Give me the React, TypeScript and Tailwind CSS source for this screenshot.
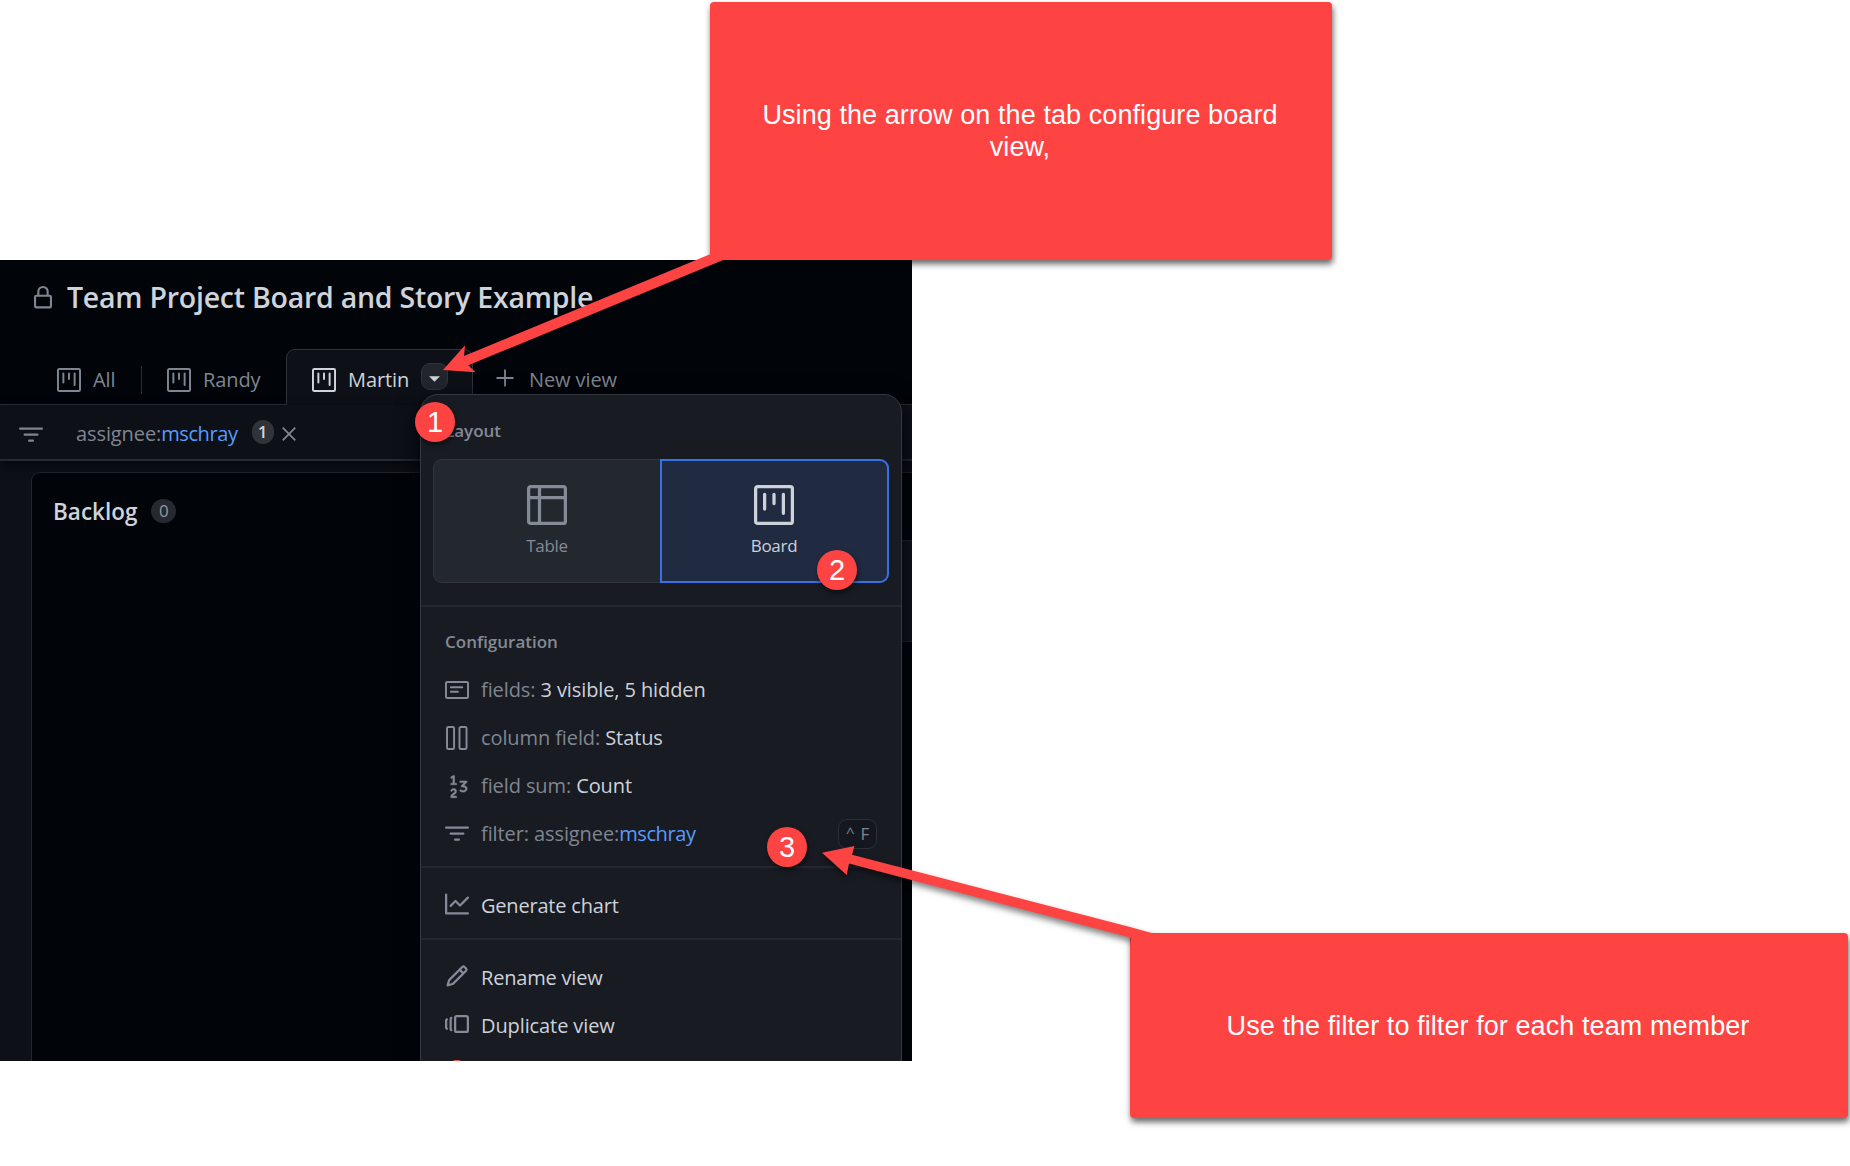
import type { ReactNode } from "react";
import { GoNumber } from "react-icons/go";

type IconProps = { className?: string };

function Svg({ className = "size-6", children }: { className?: string; children: ReactNode }) {
  return (
    <svg viewBox="0 0 16 16" className={`${className} block shrink-0`} fill="currentColor">
      {children}
    </svg>
  );
}

function LockIcon({ className }: IconProps) {
  return (
    <Svg className={className}>
      <g fill="none" stroke="currentColor" strokeWidth="1.4">
        <rect x="2.7" y="7.2" width="10.6" height="7.7" rx="0.8" />
        <path d="M4.9 7V4.4a3.1 3.1 0 0 1 6.2 0V7" />
      </g>
    </Svg>
  );
}

function BoardIcon({ className }: IconProps) {
  return (
    <Svg className={className}>
      <g fill="none" stroke="currentColor" strokeLinecap="round">
        <rect x="0.65" y="0.65" width="14.7" height="14.7" rx="0.8" strokeWidth="1.3" />
        <path d="M4.25 3.7v5.9M8 3.7v3.7M11.75 3.7v7.6" strokeWidth="1.3" />
      </g>
    </Svg>
  );
}

function TableIcon({ className }: IconProps) {
  return (
    <Svg className={className}>
      <g fill="none" stroke="currentColor" strokeWidth="1.3">
        <rect x="0.65" y="0.65" width="14.7" height="14.7" rx="0.8" />
        <path d="M5 0.8v14.4M0.8 5h14.4" />
      </g>
    </Svg>
  );
}

function FilterIcon({ className }: IconProps) {
  return (
    <Svg className={className}>
      <path d="M.75 3a.75.75 0 0 0 0 1.5h14.5a.75.75 0 0 0 0-1.5H.75ZM3 7.75A.75.75 0 0 1 3.75 7h8.5a.75.75 0 0 1 0 1.5h-8.5A.75.75 0 0 1 3 7.75Zm3 4a.75.75 0 0 1 .75-.75h2.5a.75.75 0 0 1 0 1.5h-2.5a.75.75 0 0 1-.75-.75Z" />
    </Svg>
  );
}

function FieldsIcon() {
  return (
    <Svg>
      <g fill="none" stroke="currentColor" strokeWidth="1.3">
        <rect x="0.65" y="2.65" width="14.7" height="10.7" rx="0.9" />
        <path d="M3.9 6.2h7.6M3.9 9.2h4.7" strokeLinecap="round" />
      </g>
    </Svg>
  );
}

function ColumnsIcon() {
  return (
    <Svg>
      <g fill="none" stroke="currentColor" strokeWidth="1.3">
        <rect x="1.35" y="0.65" width="4.7" height="14.7" rx="0.8" />
        <rect x="9.65" y="0.65" width="4.7" height="14.7" rx="0.8" />
      </g>
    </Svg>
  );
}

function GraphIcon() {
  return (
    <Svg>
      <path d="M1.5 1.75V13.5h13.75a.75.75 0 0 1 0 1.5H.75a.75.75 0 0 1-.75-.75V1.75a.75.75 0 0 1 1.5 0Zm14.28 2.53-5.25 5.25a.75.75 0 0 1-1.06 0L7 7.06 4.28 9.78a.751.751 0 0 1-1.042-.018.751.751 0 0 1-.018-1.042l3.25-3.25a.75.75 0 0 1 1.06 0L10 7.94l4.72-4.72a.751.751 0 0 1 1.042.018.751.751 0 0 1 .018 1.042Z" />
    </Svg>
  );
}

function PencilIcon() {
  return (
    <Svg>
      <path d="M11.013 1.427a1.75 1.75 0 0 1 2.474 0l1.086 1.086a1.75 1.75 0 0 1 0 2.474l-8.61 8.61c-.21.21-.47.364-.756.445l-3.251.93a.75.75 0 0 1-.927-.928l.929-3.25c.081-.286.235-.547.445-.758l8.61-8.61Zm.176 4.823L9.75 4.81l-6.286 6.287a.253.253 0 0 0-.064.108l-.558 1.953 1.953-.558a.253.253 0 0 0 .108-.064Zm1.238-3.763a.25.25 0 0 0-.354 0L10.811 3.75l1.439 1.44 1.263-1.263a.25.25 0 0 0 0-.354Z" />
    </Svg>
  );
}

function VersionsIcon() {
  return (
    <Svg>
      <path d="M7.75 14A1.75 1.75 0 0 1 6 12.25v-8.5C6 2.784 6.784 2 7.75 2h6.5c.966 0 1.75.784 1.75 1.75v8.5A1.75 1.75 0 0 1 14.25 14Zm-.25-1.75c0 .138.112.25.25.25h6.5a.25.25 0 0 0 .25-.25v-8.5a.25.25 0 0 0-.25-.25h-6.5a.25.25 0 0 0-.25.25ZM4.9 3.508a.75.75 0 0 1-.274 1.025.249.249 0 0 0-.126.217v6.5c0 .09.048.173.126.217a.75.75 0 0 1-.752 1.298A1.75 1.75 0 0 1 3 11.25v-6.5c0-.649.353-1.214.874-1.516a.75.75 0 0 1 1.025.274ZM1.625 5.533h.001a.249.249 0 0 0-.126.217v4.5c0 .09.048.173.126.217a.75.75 0 0 1-.752 1.298A1.748 1.748 0 0 1 0 10.25v-4.5a1.748 1.748 0 0 1 .873-1.516.75.75 0 1 1 .752 1.299Z" />
    </Svg>
  );
}

function TrashIcon() {
  return (
    <Svg>
      <path d="M11 1.75V3h2.25a.75.75 0 0 1 0 1.5H2.75a.75.75 0 0 1 0-1.5H5V1.75C5 .784 5.784 0 6.75 0h2.5C10.216 0 11 .784 11 1.75Z" />
    </Svg>
  );
}

function Tab({ icon, label, className }: { icon: ReactNode; label: string; className: string }) {
  return (
    <div className={`flex items-center gap-3 ${className}`}>
      {icon}
      <span>{label}</span>
    </div>
  );
}

function MenuItem({ icon, children, shortcut }: { icon: ReactNode; children?: ReactNode; shortcut?: ReactNode }) {
  return (
    <div className="flex h-12 shrink-0 items-center gap-3 pr-6 pl-6">
      <span className="text-[#848b96]">{icon}</span>
      <span className="flex-1 whitespace-pre">{children}</span>
      {shortcut}
    </div>
  );
}

function ActionItem({ icon, label, className }: { icon: ReactNode; label: string; className?: string }) {
  return (
    <div className="flex h-12 shrink-0 items-center gap-3 pl-6">
      <span className="text-[#848b96]">{icon}</span>
      <span className={`pt-[3px] ${className ?? ""}`}>{label}</span>
    </div>
  );
}

function Label({ children }: { children: ReactNode }) {
  return <span className="text-[#7f8691]">{children}</span>;
}

function Divider() {
  return <div className="h-0.5 shrink-0 bg-[#24272f]" />;
}

function Step({ n, className }: { n: number; className: string }) {
  return (
    <div
      className={`absolute flex size-10 items-center justify-center rounded-full bg-[#fe4343] font-['Liberation_Sans',sans-serif] text-[29px] leading-none text-white shadow-[1px_3px_5px_rgba(0,0,0,0.5)] ${className}`}
    >
      {n}
    </div>
  );
}

function ViewMenu() {
  return (
    <div className="absolute top-[134px] left-[420px] flex h-[720px] w-[482px] flex-col rounded-[18px] border border-[#343840] bg-[#181b22] tracking-[-0.1px] text-[#cdd2da] shadow-[0_8px_24px_#010409]">
      <div className="flex h-[64px] shrink-0 items-center pt-2 pl-6 text-[17px] font-semibold tracking-normal text-[#848a95]">
        Layout
      </div>
      <div className="mx-3 flex h-[124px] shrink-0 text-[17px] tracking-[-0.3px]">
        <div className="flex w-[227px] flex-col items-center rounded-l-[9px] border border-r-0 border-[#32363d] bg-[#23272e] pt-[25px] text-[#848b96]">
          <TableIcon className="size-10" />
          <span className="mt-[9px] leading-6">Table</span>
        </div>
        <div className="flex flex-1 flex-col items-center rounded-r-[9px] border-2 border-[#3572e6] bg-[#202a41] pt-[24px] pr-px">
          <BoardIcon className="size-10" />
          <span className="mt-[9px] leading-6">Board</span>
        </div>
      </div>
      <div className="h-[22px] shrink-0" />
      <Divider />
      <div className="flex h-[59px] shrink-0 items-center pt-2.5 pl-6 text-[17px] font-semibold tracking-normal text-[#848a95]">
        Configuration
      </div>
      <MenuItem icon={<FieldsIcon />}>
        <Label>fields: </Label>3 visible, 5 hidden
      </MenuItem>
      <MenuItem icon={<ColumnsIcon />}>
        <Label>column field: </Label>Status
      </MenuItem>
      <MenuItem icon={<GoNumber className="-mr-[3px] size-[27px]" stroke="currentColor" strokeWidth="0.4" />}>
        <Label>field sum: </Label>Count
      </MenuItem>
      <MenuItem
        icon={<FilterIcon />}
        shortcut={
          <kbd className="flex h-[30px] w-[39px] items-center justify-center gap-1.5 rounded-[9px] border border-[#2b2f37] bg-[#14171d] font-['Open_Sans',sans-serif] text-[17px] text-[#7f8691]">
            <span className="-mt-1 text-[15px]">^</span>
            <span>F</span>
          </kbd>
        }
      >
        <Label>filter: assignee:</Label>
        <span className="tracking-[-0.4px] text-[#589bff]">mschray</span>
      </MenuItem>
      <div className="h-2 shrink-0" />
      <Divider />
      <div className="h-3 shrink-0" />
      <ActionItem icon={<GraphIcon />} label="Generate chart" className="tracking-[-0.2px]" />
      <div className="h-2.5 shrink-0" />
      <Divider />
      <div className="h-3 shrink-0" />
      <ActionItem icon={<PencilIcon />} label="Rename view" className="tracking-[-0.2px]" />
      <ActionItem icon={<VersionsIcon />} label="Duplicate view" />
      <div className="flex h-12 shrink-0 items-center pl-6 text-[#f85149]">
        <TrashIcon />
      </div>
    </div>
  );
}

function ProjectPanel() {
  return (
    <div className="relative flex h-[801px] w-[912px] flex-col overflow-hidden bg-[#010409] font-['Open_Sans',sans-serif] text-[20px] leading-6 tracking-[-0.1px] text-[#7f8691]">
      <div className="flex h-[89px] shrink-0 items-center pb-4 pl-[31px]">
        <LockIcon />
        <h1 className="ml-3 text-[28.5px] font-semibold tracking-[-0.24px] whitespace-nowrap text-[#cfd3da]">
          Team Project Board and Story Example
        </h1>
      </div>

      <div className="flex h-14 shrink-0">
        <div className="flex w-[287px] items-center border-b border-[#30333a] pt-[6px] pl-[57px]">
          <Tab icon={<BoardIcon />} label="All" className="w-[84px]" />
          <div className="mr-px h-7 w-px bg-[#2a2d34]" />
          <Tab icon={<BoardIcon />} label="Randy" className="ml-6" />
        </div>
        <div className="-ml-px flex w-[187px] items-center rounded-t-[9px] border border-b-0 border-[#30333a] bg-[#0d1117] pt-[5px] pl-[25px] text-[#cfd3da]">
          <Tab icon={<BoardIcon />} label="Martin" className="w-[109px]" />
          <div className="mb-[7px] flex h-[27px] w-[27px] items-center justify-center rounded-[9px] border border-[#30333a] bg-[#22252c]">
            <svg viewBox="0 0 12 6" className="mt-[5px] h-[6px] w-[11px]" fill="currentColor">
              <path d="M0 0h12L6 6Z" />
            </svg>
          </div>
        </div>
        <div className="flex flex-1 items-center border-b border-[#30333a] pt-[6px] pl-[23px]">
          <svg viewBox="0 0 18 18" className="-mt-1 size-[18px]" stroke="currentColor" strokeWidth="1.8">
            <path d="M9 0.5v17M0.5 9h17" />
          </svg>
          <span className="ml-[15px]">New view</span>
        </div>
      </div>

      <div className="z-0 flex h-[56px] shrink-0 items-center border-b-2 border-[#262930] bg-[#0d1117] pt-1 pl-[19px] shadow-[0_4px_10px_#05070b]">
        <FilterIcon className="mt-0.5 size-6" />
        <span className="ml-[33px]">assignee:</span>
        <span className="tracking-[-0.4px] text-[#589bff]">mschray</span>
        <span className="mb-[5px] ml-[14px] flex h-6 w-[22px] items-center justify-center rounded-full bg-[#30333a] text-[17px] font-semibold text-[#cfd3da]">
          1
        </span>
        <svg viewBox="0 0 14 14" className="ml-2 size-[14px]" stroke="currentColor" strokeWidth="1.8">
          <path d="M0.7 0.7l12.6 12.6M13.3 0.7L0.7 13.3" />
        </svg>
      </div>

      <div className="flex flex-1 bg-[#0d1117] pt-[11px] pl-[31px]">
        <div className="w-[860px] shrink-0 rounded-tl-[9px] border-t border-l border-[#22252c] bg-[#010409]">
          <div className="flex items-center pt-[27px] pl-[21px]">
            <h2 className="text-[22.5px] font-semibold tracking-normal text-[#cfd3da]">Backlog</h2>
            <span className="-mt-[3px] ml-[14px] flex h-6 w-[25px] items-center justify-center rounded-full bg-[#26292f] text-[17px] text-[#9298a2]">
              0
            </span>
          </div>
        </div>
        <div className="flex flex-1 flex-col border-t border-[#22252c] bg-[#010409] pt-[67px]">
          <div className="h-[102px] border-y border-[#22252c] bg-[#11151b]" />
        </div>
      </div>

      <ViewMenu />
    </div>
  );
}

export default function App() {
  return (
    <main className="relative h-[1166px] w-[1850px] overflow-hidden bg-white pt-[260px]">
      <ProjectPanel />

      <div className="absolute top-[2px] left-[710px] flex h-[258px] w-[622px] items-center justify-center rounded-[4px] bg-[#fe4343] pr-[41px] pl-[39px] text-center font-['Liberation_Sans',sans-serif] text-[27px] leading-8 tracking-[0.08px] text-white shadow-[1px_4px_6px_rgba(0,0,0,0.6)]">
        Using the arrow on the tab configure board view,
      </div>
      <div className="absolute top-[933px] left-[1130px] flex h-[185px] w-[718px] items-center justify-center rounded-[4px] bg-[#fe4343] pr-0.5 text-center font-['Liberation_Sans',sans-serif] text-[27px] leading-8 tracking-[0.08px] text-white shadow-[1px_4px_6px_rgba(0,0,0,0.6)]">
        Use the filter to filter for each team member
      </div>

      <svg
        viewBox="0 0 1850 1166"
        className="pointer-events-none absolute inset-0 h-[1166px] w-[1850px]"
        fill="#fe4343"
      >
        <path d="M443 370 465 345.3 464 356 710 254.2 712 250 724 259 722 260.4 468.3 365.3 475.5 372.3Z" />
        <path
          className="drop-shadow-[1px_4px_3px_rgba(0,0,0,0.5)]"
          d="M822 852.7 854.5 846 852 854.8 1130 927 1152.5 933.2 1152 936 1131 938 1130 937.6 849 863.5 846.7 875Z"
        />
        <path d="M1131 934h30v14h-30Z" />
      </svg>

      <Step n={1} className="top-[402px] left-[415px]" />
      <Step n={2} className="top-[550px] left-[817px]" />
      <Step n={3} className="top-[827px] left-[767px]" />
    </main>
  );
}
